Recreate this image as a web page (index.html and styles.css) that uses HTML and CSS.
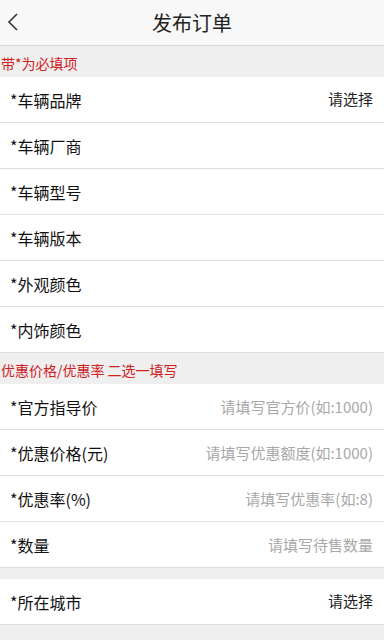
FILE: index.html
```html
<!DOCTYPE html>
<html>
<head>
    <meta charset="utf-8">
    <title>发布订单</title>
    <link rel="stylesheet" href="styles.css">
</head>
<body>
    <div class="header">
        <span class="back">
            <svg width="12" height="20" viewBox="0 0 12 20"><path d="M10 2 L2 10 L10 18" fill="none" stroke="#333" stroke-width="1.6"/></svg>
        </span>
        <h1>发布订单</h1>
    </div>

    <div class="tip">带*为必填项</div>
    <div class="group">
        <div class="row"><span class="label">*车辆品牌</span><span class="select">请选择</span></div>
        <div class="row"><span class="label">*车辆厂商</span></div>
        <div class="row"><span class="label">*车辆型号</span></div>
        <div class="row"><span class="label">*车辆版本</span></div>
        <div class="row"><span class="label">*外观颜色</span></div>
        <div class="row"><span class="label">*内饰颜色</span></div>
    </div>

    <div class="tip">优惠价格/优惠率 二选一填写</div>
    <div class="group">
        <div class="row"><span class="label">*官方指导价</span><span class="hint">请填写官方价(如:1000)</span></div>
        <div class="row"><span class="label">*优惠价格(元)</span><span class="hint">请填写优惠额度(如:1000)</span></div>
        <div class="row"><span class="label">*优惠率(%)</span><span class="hint">请填写优惠率(如:8)</span></div>
        <div class="row"><span class="label">*数量</span><span class="hint">请填写待售数量</span></div>
    </div>

    <div class="spacer"></div>
    <div class="group">
        <div class="row"><span class="label">*所在城市</span><span class="select">请选择</span></div>
    </div>
</body>
</html>
```

FILE: styles.css
```css
body {
    margin: 0;
    background: #efefef;
    font-family: "Noto Sans CJK SC", "Noto Sans", sans-serif;
    color: #222;
}
.header {
    height: 45px;
    background: #f8f8f8;
    border-bottom: 1px solid #dcdcdc;
    display: flex;
    align-items: center;
    justify-content: center;
    position: relative;
}
.header h1 {
    margin: 0;
    font-size: 20px;
    font-weight: normal;
    color: #222;
}
.back {
    position: absolute;
    left: 7px;
    top: 12px;
}
.tip {
    height: 31px;
    line-height: 35px;
    font-size: 14px;
    color: #d0211f;
    padding-left: 1px;
    overflow: hidden;
}
.group {
    background: #fff;
}
.row {
    height: 45px;
    border-bottom: 1px solid #dedede;
    display: flex;
    align-items: center;
    justify-content: space-between;
    padding: 0 11px 0 10px;
}
.label {
    font-size: 16px;
    color: #111;
}
.select {
    font-size: 15px;
    color: #222;
    margin-bottom: 3px;
}
.hint {
    font-size: 15px;
    color: #a8a8a8;
}
.spacer {
    height: 11px;
}
```
